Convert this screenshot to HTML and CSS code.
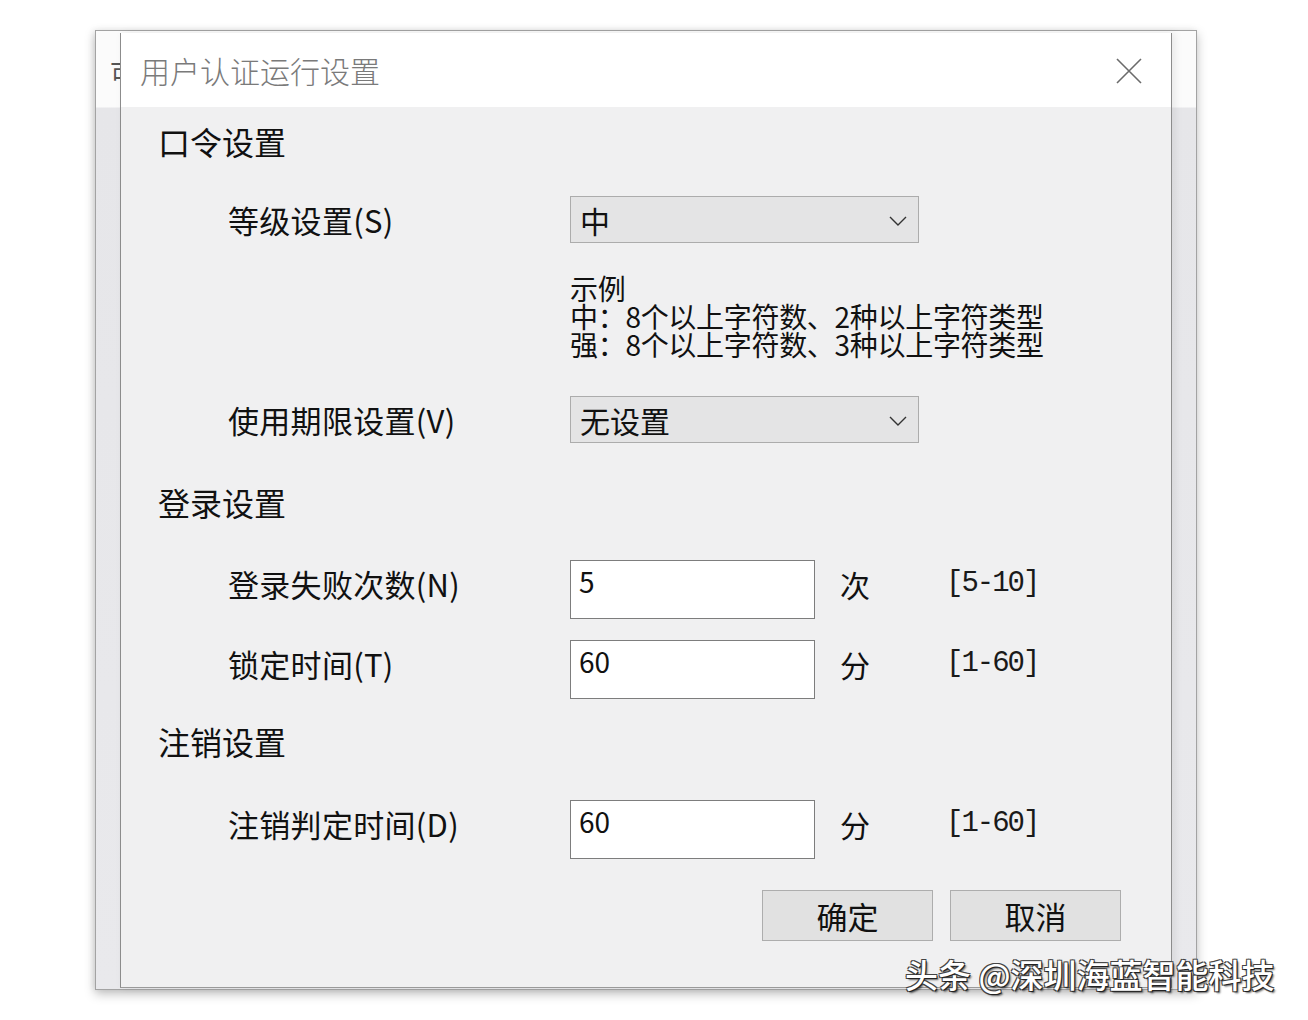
FILE: index.html
```html
<!DOCTYPE html>
<html lang="zh-CN">
<head>
    <meta charset="UTF-8">
    <meta name="viewport" content="width=device-width, initial-scale=1.0">
    <title>用户认证运行设置</title>
    <link rel="stylesheet" href="styles.css">
</head>
<body>
    <div class="back-window">
        <span class="back-title">可</span>
        <div class="dialog">
            <div class="dialog-titlebar">
                <span class="dialog-title">用户认证运行设置</span>
                <svg class="close-icon" width="26" height="26" viewBox="0 0 26 26" aria-label="关闭">
                    <path d="M1 1 L25 25 M25 1 L1 25" stroke="#6b6b6b" stroke-width="1.6" fill="none"/>
                </svg>
            </div>

            <div class="dialog-body">
                <!-- 口令设置 -->
                <div class="section-title sec-password">口令设置</div>
                <div class="field-row row-level">
                    <span class="field-label">等级设置(S)</span>
                    <div class="select-box">
                        <span>中</span>
                        <svg class="chevron" width="18" height="10" viewBox="0 0 18 10">
                            <path d="M1 1 L9 9 L17 1" stroke="#333" stroke-width="1.4" fill="none"/>
                        </svg>
                    </div>
                </div>
                <div class="example">
                    <div>示例</div>
                    <div>中：8个以上字符数、2种以上字符类型</div>
                    <div>强：8个以上字符数、3种以上字符类型</div>
                </div>
                <div class="field-row row-expire">
                    <span class="field-label">使用期限设置(V)</span>
                    <div class="select-box">
                        <span>无设置</span>
                        <svg class="chevron" width="18" height="10" viewBox="0 0 18 10">
                            <path d="M1 1 L9 9 L17 1" stroke="#333" stroke-width="1.4" fill="none"/>
                        </svg>
                    </div>
                </div>

                <!-- 登录设置 -->
                <div class="section-title sec-login">登录设置</div>
                <div class="field-row row-fail">
                    <span class="field-label">登录失败次数(N)</span>
                    <div class="text-box">5</div>
                    <span class="unit">次</span>
                    <span class="range">[5-10]</span>
                </div>
                <div class="field-row row-lock">
                    <span class="field-label">锁定时间(T)</span>
                    <div class="text-box">60</div>
                    <span class="unit">分</span>
                    <span class="range">[1-60]</span>
                </div>

                <!-- 注销设置 -->
                <div class="section-title sec-logout">注销设置</div>
                <div class="field-row row-logout">
                    <span class="field-label">注销判定时间(D)</span>
                    <div class="text-box">60</div>
                    <span class="unit">分</span>
                    <span class="range">[1-60]</span>
                </div>

                <div class="button-row">
                    <button class="dlg-btn">确定</button>
                    <button class="dlg-btn">取消</button>
                </div>
            </div>
        </div>
    </div>

    <div class="watermark">头条 @深圳海蓝智能科技</div>
</body>
</html>
```

FILE: styles.css
```css
body {
    margin: 0;
    padding: 0;
    background-color: #ffffff;
    font-family: "Noto Sans CJK SC", "Noto Sans", sans-serif;
    color: #111111;
    position: relative;
    height: 1020px;
    overflow: hidden;
}

.back-window {
    position: relative;
    box-sizing: border-box;
    margin: 30px 0 0 95px;
    width: 1102px;
    height: 960px;
    padding: 2px 24px 1px 24px;
    border: 1px solid #a3a3a3;
    background: linear-gradient(to bottom, #fbfbfb 0, #fbfbfb 76px, #e6e6e9 77px, #e9e9ec 100%);
    box-shadow: 0 4px 10px rgba(0, 0, 0, 0.25), -2px 0 6px rgba(0, 0, 0, 0.06);
}

.back-title {
    position: absolute;
    left: 14px;
    top: 22px;
    font-size: 26px;
    color: #555555;
}

.dialog {
    position: relative;
    z-index: 1;
    box-sizing: border-box;
    width: 1052px;
    height: 955px;
    border-left: 1px solid #8c8c8c;
    border-right: 1px solid #8c8c8c;
    border-bottom: 1px solid #9a9a9a;
    background-color: #f0f0f1;
    box-shadow: 3px 0 8px rgba(0, 0, 0, 0.08);
    display: flex;
    flex-direction: column;
}

.dialog-titlebar {
    height: 74px;
    background-color: #ffffff;
    display: flex;
    align-items: center;
    justify-content: space-between;
    padding: 0 29px 0 19px;
}

.dialog-title {
    font-size: 30px;
    color: #7a7a7a;
    font-weight: 300;
}

.close-icon {
    margin-top: 1px;
}

.dialog-body {
    display: flex;
    flex-direction: column;
    padding-left: 37px;
}

.section-title {
    font-size: 32px;
    line-height: 40px;
    height: 40px;
}

.sec-password {
    margin-top: 14px;
}

.sec-login {
    margin-top: 38px;
}

.sec-logout {
    margin-top: 22px;
}

.field-row {
    display: flex;
    align-items: flex-start;
    padding-left: 70px;
}

.row-level {
    margin-top: 35px;
}

.row-expire {
    margin-top: 38px;
}

.row-fail {
    margin-top: 38px;
}

.row-lock {
    margin-top: 21px;
}

.row-logout {
    margin-top: 39px;
}

.field-label {
    width: 342px;
    flex-shrink: 0;
    font-size: 31px;
    line-height: 48px;
    letter-spacing: 0.3px;
}

.select-box {
    box-sizing: border-box;
    width: 349px;
    height: 47px;
    border: 1px solid #acacac;
    background-color: #e4e4e5;
    display: flex;
    align-items: center;
    justify-content: space-between;
    padding: 0 11px 0 9px;
    font-size: 30px;
}

.chevron {
    margin-top: 2px;
}

.example {
    margin-top: 30px;
    padding-left: 412px;
    font-size: 28px;
    line-height: 28px;
    letter-spacing: -0.3px;
}

.text-box {
    box-sizing: border-box;
    width: 245px;
    height: 59px;
    border: 1px solid #7d7d7d;
    background-color: #ffffff;
    font-size: 28px;
    line-height: 40px;
    padding-left: 8px;
}

.unit {
    width: 106px;
    flex-shrink: 0;
    margin-left: 25px;
    font-size: 30px;
    line-height: 48px;
}

.range {
    font-family: "Liberation Mono", monospace;
    font-size: 29px;
    line-height: 48px;
    letter-spacing: -2px;
    color: #1a1a1a;
}

.button-row {
    display: flex;
    justify-content: flex-end;
    gap: 17px;
    margin-top: 31px;
    padding-right: 50px;
}

.dlg-btn {
    box-sizing: border-box;
    width: 171px;
    height: 51px;
    border: 1px solid #adadad;
    background-color: #e1e1e1;
    font-family: "Noto Sans CJK SC", sans-serif;
    font-size: 31px;
    color: #111111;
    padding: 0;
    line-height: 1;
}

.watermark {
    position: absolute;
    left: 905px;
    top: 950px;
    z-index: 2;
    font-size: 33px;
    font-weight: 500;
    color: #ffffff;
    text-shadow: 1px 1px 0 #222, -1px -1px 0 #444, 1px -1px 0 #444, -1px 1px 0 #444, 2px 2px 2px rgba(0, 0, 0, 0.6);
}
```
